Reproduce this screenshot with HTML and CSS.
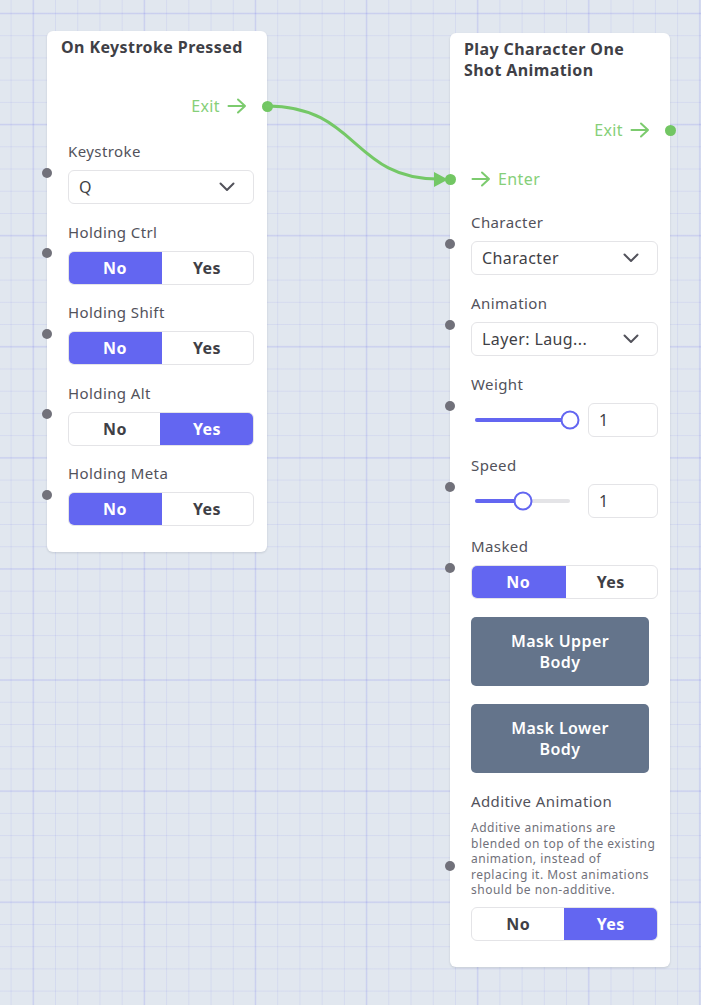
FILE: index.html
```html
<!DOCTYPE html>
<html lang="en">
<head>
<meta charset="utf-8">
<title>Node graph</title>
<link rel="stylesheet" href="styles.css">
</head>
<body>
<div class="canvas">

  <div class="node node-keystroke">
    <div class="node-title">On Keystroke Pressed</div>
    <div class="port-row port-exit">
      <span class="port-text">Exit</span>
      <svg class="port-arrow" viewBox="0 0 20 16" width="20" height="16"><path d="M1.5 8H18M11 1.5L18 8L11 14.5"/></svg>
      <span class="port-dot port-dot-right"></span>
    </div>
    <div class="fields">
      <div class="field">
        <span class="handle"></span>
        <div class="label">Keystroke</div>
        <div class="select"><span class="select-value">Q</span><svg class="chevron" viewBox="0 0 16 10" width="16" height="10"><path d="M1.5 1.5L8 8L14.5 1.5"/></svg></div>
      </div>
      <div class="field">
        <span class="handle"></span>
        <div class="label">Holding Ctrl</div>
        <div class="toggle"><span class="opt on">No</span><span class="opt">Yes</span></div>
      </div>
      <div class="field">
        <span class="handle"></span>
        <div class="label">Holding Shift</div>
        <div class="toggle"><span class="opt on">No</span><span class="opt">Yes</span></div>
      </div>
      <div class="field">
        <span class="handle"></span>
        <div class="label">Holding Alt</div>
        <div class="toggle"><span class="opt">No</span><span class="opt on">Yes</span></div>
      </div>
      <div class="field">
        <span class="handle"></span>
        <div class="label">Holding Meta</div>
        <div class="toggle"><span class="opt on">No</span><span class="opt">Yes</span></div>
      </div>
    </div>
  </div>

  <div class="node node-animation">
    <div class="node-title">Play Character One Shot Animation</div>
    <div class="port-row port-exit">
      <span class="port-text">Exit</span>
      <svg class="port-arrow" viewBox="0 0 20 16" width="20" height="16"><path d="M1.5 8H18M11 1.5L18 8L11 14.5"/></svg>
      <span class="port-dot port-dot-right"></span>
    </div>
    <div class="port-row port-enter">
      <span class="port-dot port-dot-left"></span>
      <svg class="port-arrow" viewBox="0 0 20 16" width="20" height="16"><path d="M1.5 8H18M11 1.5L18 8L11 14.5"/></svg>
      <span class="port-text">Enter</span>
    </div>
    <div class="fields fields-wide">
      <div class="field">
        <span class="handle"></span>
        <div class="label">Character</div>
        <div class="select"><span class="select-value">Character</span><svg class="chevron" viewBox="0 0 16 10" width="16" height="10"><path d="M1.5 1.5L8 8L14.5 1.5"/></svg></div>
      </div>
      <div class="field">
        <span class="handle"></span>
        <div class="label">Animation</div>
        <div class="select"><span class="select-value">Layer: Laug...</span><svg class="chevron" viewBox="0 0 16 10" width="16" height="10"><path d="M1.5 1.5L8 8L14.5 1.5"/></svg></div>
      </div>
      <div class="field">
        <span class="handle"></span>
        <div class="label">Weight</div>
        <div class="slider-row">
          <div class="slider"><div class="track"><div class="fill" style="width:100%"></div><span class="thumb" style="left:100%"></span></div></div>
          <div class="number">1</div>
        </div>
      </div>
      <div class="field">
        <span class="handle"></span>
        <div class="label">Speed</div>
        <div class="slider-row">
          <div class="slider"><div class="track"><div class="fill" style="width:50%"></div><span class="thumb" style="left:50%"></span></div></div>
          <div class="number">1</div>
        </div>
      </div>
      <div class="field">
        <span class="handle"></span>
        <div class="label">Masked</div>
        <div class="toggle"><span class="opt on">No</span><span class="opt">Yes</span></div>
      </div>
      <div class="action">Mask Upper<br>Body</div>
      <div class="action">Mask Lower<br>Body</div>
      <div class="field">
        <span class="handle"></span>
        <div class="label">Additive Animation</div>
        <p class="desc">Additive animations are<br>blended on top of the existing<br>animation, instead of<br>replacing it. Most animations<br>should be non-additive.</p>
        <div class="toggle"><span class="opt">No</span><span class="opt on">Yes</span></div>
      </div>
    </div>
  </div>

  <svg class="wires" width="701" height="1005" viewBox="0 0 701 1005">
    <path class="wire" d="M267 106 C 358 106, 352 179, 438 179"/>
    <polygon class="wire-head" points="434,172 434,187 448,179.5"/>
  </svg>
</div>
</body>
</html>
```

FILE: styles.css
```css
* { box-sizing: border-box; }

html, body {
  margin: 0;
  padding: 0;
}

body {
  font-family: "Noto Sans", "Open Sans", sans-serif;
  color: #3f3f46;
  letter-spacing: 0.4px;
}

.canvas {
  position: relative;
  width: 701px;
  height: 1005px;
  overflow: hidden;
  background-color: #e1e7ef;
  background-image:
    linear-gradient(to right, rgba(110, 115, 235, 0.1) 2px, transparent 2px),
    linear-gradient(to bottom, rgba(110, 115, 235, 0.1) 2px, transparent 2px),
    linear-gradient(to right, rgba(110, 115, 235, 0.11) 1px, transparent 1px),
    linear-gradient(to bottom, rgba(110, 115, 235, 0.11) 1px, transparent 1px);
  background-size: 111.1px 111.1px, 111.1px 111.1px, 22.22px 22.22px, 22.22px 22.22px;
  background-position: 32.3px 12.5px, 32.3px 12.5px, 10.6px 13px, 10.6px 13px;
}

/* nodes sit on a free canvas */
.node {
  position: absolute;
  width: 220px;
  background: #ffffff;
  border-radius: 6px;
  box-shadow: 0 1px 3px rgba(15, 23, 42, 0.08), 0 1px 2px rgba(15, 23, 42, 0.05);
  padding: 6px 0 26px;
}

.node-keystroke { left: 47px; top: 31px; }
.node-animation { left: 450px; top: 33px; width: 220px; }

.node-title {
  padding: 0 14px;
  font-size: 16px;
  line-height: 21px;
  font-weight: 700;
  color: #3f3f46;
}

.port-row {
  position: relative;
  display: flex;
  align-items: center;
  height: 20px;
  gap: 7px;
  color: #86cf79;
  font-size: 16px;
  line-height: 20px;
}

.port-exit {
  justify-content: flex-end;
  padding-right: 20px;
  margin-top: 38px;
}

.node-animation .port-exit { margin-top: 39px; }

.port-enter {
  padding-left: 21px;
  margin-top: 29px;
}

.port-arrow {
  fill: none;
  stroke: #7ccb6e;
  stroke-width: 2;
  stroke-linecap: round;
  stroke-linejoin: round;
}

.port-dot {
  position: absolute;
  top: 50%;
  width: 11px;
  height: 11px;
  margin-top: -5.5px;
  border-radius: 50%;
  background: #72c663;
}

.port-dot-right { right: -5.5px; }
.port-dot-left { left: -5.5px; }

.fields {
  display: flex;
  flex-direction: column;
  gap: 17.5px;
  padding: 0 13px 0 21px;
  margin-top: 25px;
}

.fields-wide {
  gap: 18px;
  padding-right: 12px;
  margin-top: 23px;
}

.field {
  position: relative;
  display: flex;
  flex-direction: column;
}

.handle {
  position: absolute;
  left: -26px;
  top: 50%;
  width: 10px;
  height: 10px;
  margin-top: -5px;
  border-radius: 50%;
  background: #71717a;
}

.label {
  font-size: 15px;
  line-height: 20px;
  color: #52525b;
  margin-bottom: 9px;
}

.select {
  display: flex;
  align-items: center;
  justify-content: space-between;
  height: 34px;
  padding: 0 18px 0 10px;
  border: 1px solid #e4e4e7;
  border-radius: 6px;
  font-size: 16px;
  color: #3f3f46;
  gap: 8px;
}

.select-value {
  white-space: nowrap;
}

.chevron {
  flex: none;
  fill: none;
  stroke: #52525b;
  stroke-width: 2;
  stroke-linecap: round;
  stroke-linejoin: round;
}

.toggle {
  display: grid;
  grid-template-columns: 1fr 1fr;
  height: 34px;
  border: 1px solid #e4e4e7;
  border-radius: 6px;
  overflow: hidden;
}

.opt {
  display: flex;
  align-items: center;
  justify-content: center;
  font-size: 16px;
  font-weight: 700;
  color: #3f3f46;
}

.opt.on {
  background: #6366f1;
  color: #ffffff;
  margin: -1px;
}

.slider-row {
  display: flex;
  align-items: center;
  gap: 12px;
  height: 34px;
}

.slider {
  flex: 1;
  padding: 0 6px 0 4px;
}

.track {
  position: relative;
  height: 4px;
  border-radius: 2px;
  background: #e4e4e7;
}

.fill {
  height: 100%;
  border-radius: 2px;
  background: #6366f1;
}

.thumb {
  position: absolute;
  top: 50%;
  width: 19px;
  height: 19px;
  transform: translate(-50%, -50%);
  border-radius: 50%;
  background: #ffffff;
  border: 2px solid #6366f1;
}

.number {
  flex: none;
  width: 70px;
  height: 34px;
  display: flex;
  align-items: center;
  padding-left: 10px;
  border: 1px solid #e4e4e7;
  border-radius: 6px;
  font-size: 16px;
  color: #3f3f46;
}

.action {
  margin-right: 9px;
  height: 69px;
  display: flex;
  align-items: center;
  justify-content: center;
  text-align: center;
  background: #64748b;
  color: #ffffff;
  border-radius: 5px;
  font-size: 16px;
  font-weight: 600;
  line-height: 21px;
}

.desc {
  margin: 0 0 9.5px;
  font-size: 12px;
  line-height: 15.6px;
  letter-spacing: 0.5px;
  white-space: nowrap;
  color: #71717a;
}

.wires {
  position: absolute;
  left: 0;
  top: 0;
  pointer-events: none;
}

.wire {
  fill: none;
  stroke: #74c866;
  stroke-width: 3;
  stroke-linecap: round;
}

.wire-head {
  fill: #74c866;
}
```
